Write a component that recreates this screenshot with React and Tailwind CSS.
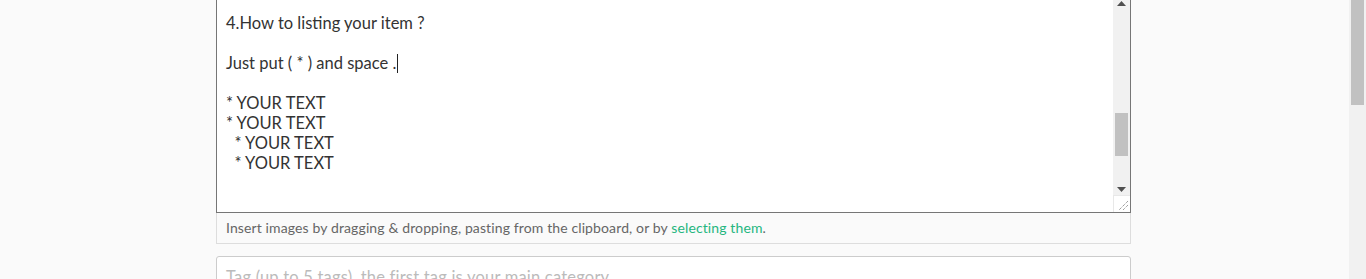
const lines = [
    '4.How to listing your item ?',
    '',
    'Just put ( * ) and space .',
    '',
    '* YOUR TEXT',
    '* YOUR TEXT',
    '  * YOUR TEXT',
    '  * YOUR TEXT',
];

function ScrollArrow({ down }) {
    return (
        <svg width="9" height="5" viewBox="0 0 9 5" className="block">
            {down ? <path d="M0 0h9L4.5 5z" fill="#505050" /> : <path d="M0 5h9L4.5 0z" fill="#505050" />}
        </svg>
    );
}

export default function App() {
    return (
        <div className="flex h-[279px] overflow-hidden bg-[#fafafa] font-['Lato',sans-serif]">
            <div className="flex-1 pl-[216px]">
                {/* editor */}
                <div className="flex w-[915px] h-[213px] bg-white border-x border-b border-[#767676]">
                    <div className="flex-1 pl-[9px] pt-[13px] text-[16.5px] leading-[20px] text-[#333] whitespace-pre">
                        {lines.map((l, i) => (
                            <div key={i} className="h-[20px]">
                                {l}
                                {i === 2 && <span className="inline-block w-px h-[19px] bg-[#222] align-[-4px] ml-[1px]"></span>}
                            </div>
                        ))}
                    </div>
                    <div className="w-[17px] flex flex-col">
                        <div className="flex-1 flex flex-col bg-[#f1f1f1]">
                            <div className="h-[10px] flex items-start justify-center pt-px"><ScrollArrow /></div>
                            <div className="h-[103px]"></div>
                            <div className="mx-[2px] h-[43px] bg-[#c1c1c1]"></div>
                            <div className="flex-1"></div>
                            <div className="h-[12px] flex items-center justify-center"><ScrollArrow down /></div>
                        </div>
                        <div className="h-[17px] bg-white border-l border-t border-[#e8e8e8] flex items-end justify-end p-[2px]">
                            <svg width="9" height="9" viewBox="0 0 9 9">
                                <path d="M9 0L0 9M9 4L4 9" stroke="#777" strokeWidth="1" strokeDasharray="1 1" />
                            </svg>
                        </div>
                    </div>
                </div>
                {/* status bar */}
                <div className="w-[915px] h-[31px] bg-[#fafafa] border-x border-b border-[#ddd] pl-[9px] pt-[6px] text-[14px] leading-[17px] tracking-[0.12px] text-[#666]">
                    Insert images by dragging &amp; dropping, pasting from the clipboard, or by{' '}
                    <span className="text-[#26b67f]">selecting them</span>.
                </div>
                {/* tags */}
                <div className="mt-[12px] w-[915px] h-[40px] bg-white border border-[#ccc] rounded-[3px] pl-[9px] pt-[10px] text-[16.5px] leading-[20px] tracking-[0.2px] text-[#bbb]">
                    Tag (up to 5 tags), the first tag is your main category
                </div>
            </div>
            {/* page scrollbar */}
            <div className="w-[17px] bg-[#f1f1f1] flex flex-col">
                <div className="mx-[2px] h-[105px] bg-[#c1c1c1]"></div>
            </div>
        </div>
    );
}
